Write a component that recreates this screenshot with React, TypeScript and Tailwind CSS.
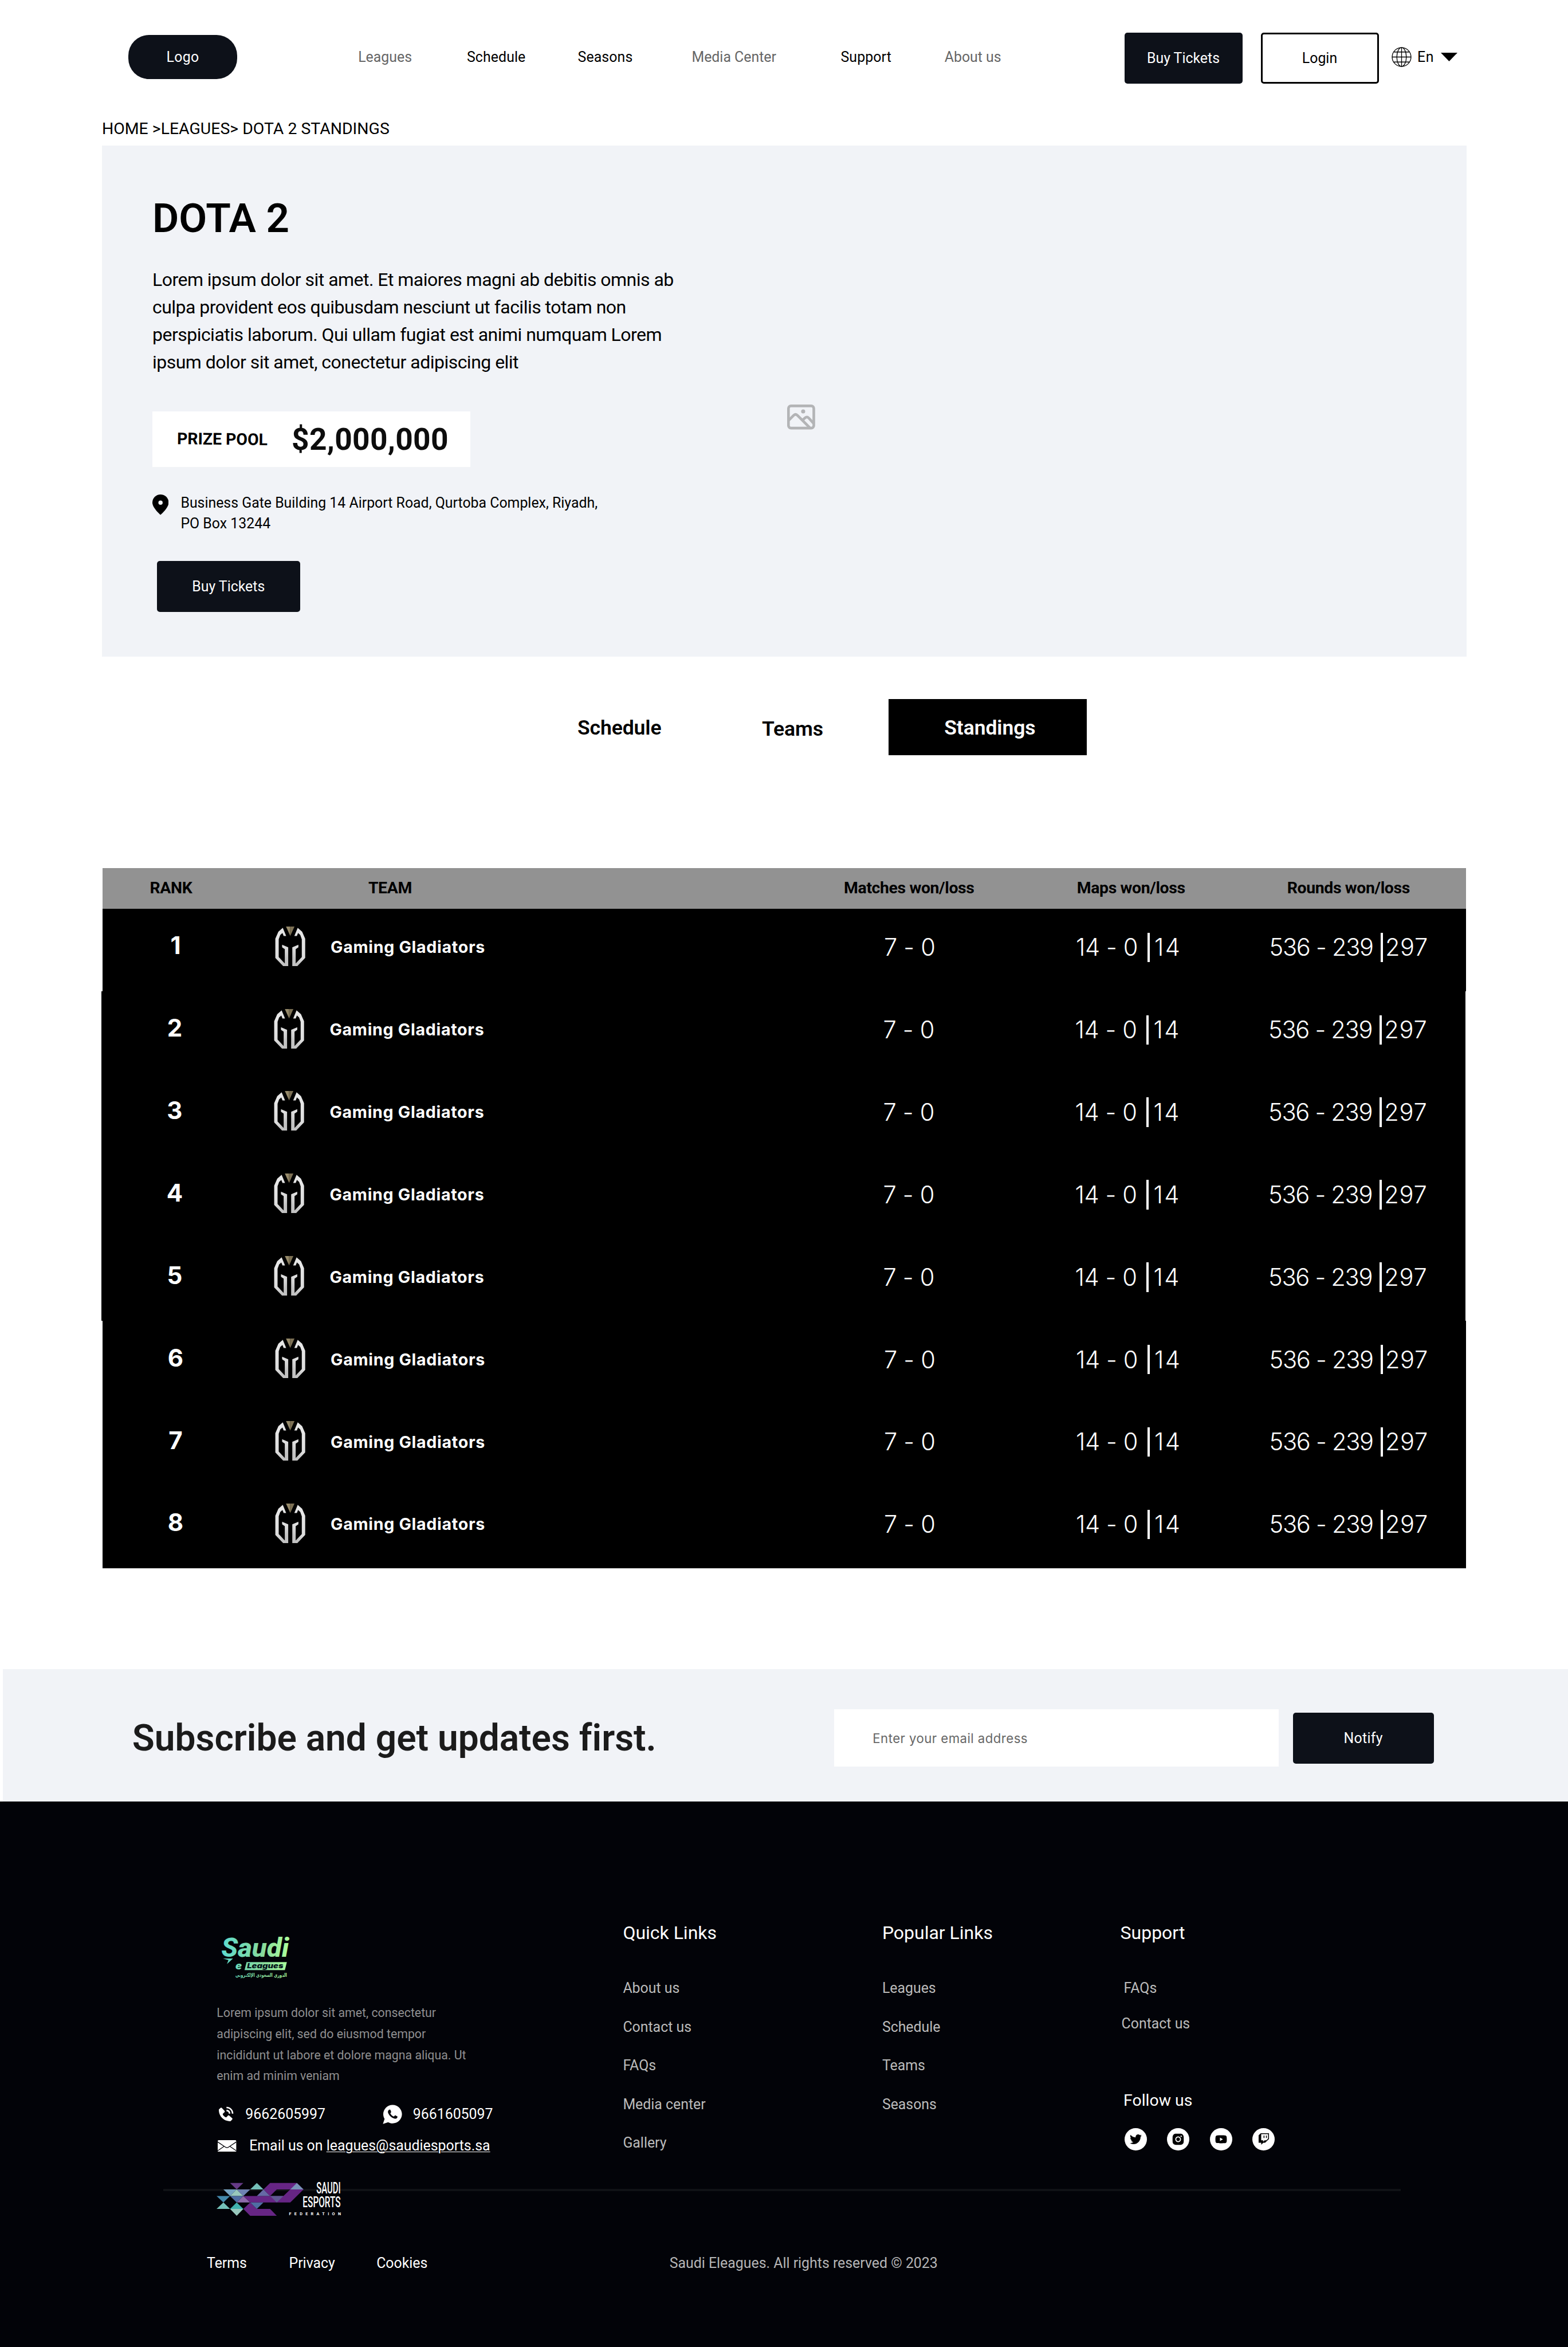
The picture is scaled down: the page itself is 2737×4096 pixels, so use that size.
import { AiFillInstagram } from 'react-icons/ai'
import { BiSolidPhoneCall } from 'react-icons/bi'
import { FaTwitch, FaTwitter, FaYoutube } from 'react-icons/fa'
import { IoLogoWhatsapp } from 'react-icons/io'

interface Standing {
  rank: number
  team: string
  matches: string
  maps: string
  mapDiff: string
  rounds: string
  roundDiff: string
}

const standings: Standing[] = [1, 2, 3, 4, 5, 6, 7, 8].map(rank => ({
  rank,
  team: 'Gaming Gladiators',
  matches: '7 - 0',
  maps: '14 - 0',
  mapDiff: '14',
  rounds: '536 - 239',
  roundDiff: '297',
}))

const navLinks = [
  { label: 'Leagues', muted: true },
  { label: 'Schedule', muted: false },
  { label: 'Seasons', muted: false },
  { label: 'Media Center', muted: true },
  { label: 'Support', muted: false },
  { label: 'About us', muted: true },
]

const quickLinks = ['About us', 'Contact us', 'FAQs', 'Media center', 'Gallery']
const popularLinks = ['Leagues', 'Schedule', 'Teams', 'Seasons']

function GlobeIcon() {
  return (
    <svg viewBox="0 0 40 40" className="size-[35px]" fill="none" stroke="#000" strokeWidth="1.5">
      <circle cx="20" cy="20" r="18.8" />
      <ellipse cx="20" cy="20" rx="9.5" ry="18.8" />
      <path d="M20 1v38M1 20h38M4.5 10h31M4.5 30h31" />
    </svg>
  )
}

function PinIcon() {
  return (
    <svg viewBox="0 0 32 40" className="mt-[3px] h-[35.5px] w-[28.4px]">
      <path d="M16 0C7 0 0 7 0 16c0 10.5 16 24 16 24s16-13.5 16-24C32 7 25 0 16 0z" fill="#000" />
      <circle cx="16" cy="16" r="4.2" fill="#f1f3f7" />
    </svg>
  )
}

function ImageIcon() {
  return (
    <svg viewBox="0 0 55 49" className="mt-[452px] ml-[180px] h-[43.5px] w-[48.8px]" fill="none" stroke="#b3b4b6" strokeWidth="5.2">
      <rect x="2.6" y="2.6" width="49.8" height="43.8" rx="5" />
      <path d="M3 31l9.5-9.5q4-4 8 0L45 46M30 31l5.5-5q3.5-3 7 .5L52 37" />
      <circle cx="31.5" cy="13.5" r="4" fill="#b3b4b6" stroke="none" />
    </svg>
  )
}

function MailIcon() {
  return (
    <svg viewBox="0 0 36 23" className="ml-[2px] h-[20.7px] w-[32.4px]">
      <rect width="36" height="23" rx="2" fill="#fff" />
      <path d="M0 3.5l15.5 10.3q2.5 1.5 5 0L36 3.5M0 20.5l12.5-8.5M36 20.5L23.5 12" fill="none" stroke="#020308" strokeWidth="1.4" />
    </svg>
  )
}

function GladiatorLogo() {
  const half = '110,68 84,90 66,132 66,245 112,293 142,293 142,182 106,167 106,182 122,193 122,278 86,240 86,135 95,110 108,98 115,116 130,116'
  return (
    <svg viewBox="65 60 178 234" className="h-[69.3px] w-[53.3px]">
      <defs>
        <linearGradient id="steel" x1="0" y1="0" x2="0.4" y2="1">
          <stop offset="0" stopColor="#ececec" />
          <stop offset="0.75" stopColor="#dcdcdc" />
          <stop offset="1" stopColor="#c2c2c2" />
        </linearGradient>
      </defs>
      <polygon points={half} fill="url(#steel)" />
      <polygon points={half} fill="url(#steel)" transform="translate(308 0) scale(-1 1)" />
      <polygon points="129,60 154,60 154,116" fill="#968a6a" />
      <polygon points="179,60 154,60 154,116" fill="#7c7054" />
    </svg>
  )
}

function SaudiEleaguesLogo() {
  return (
    <svg viewBox="0 0 135 87" className="ml-[7.5px] h-[76.5px] w-[119.6px] overflow-visible">
      <defs>
        <linearGradient id="mint" gradientUnits="userSpaceOnUse" x1="0" y1="0" x2="135" y2="0">
          <stop offset="0" stopColor="#5edccf" />
          <stop offset="0.6" stopColor="#86d99a" />
          <stop offset="1" stopColor="#adff9c" />
        </linearGradient>
      </defs>
      <g fill="url(#mint)" fontFamily="Roboto, sans-serif" fontWeight="800" fontStyle="italic">
        <text x="0" y="46" fontSize="52" textLength="134" lengthAdjust="spacingAndGlyphs">
          Saudi
        </text>
        {/* bolt tail under the wordmark */}
        <path d="M3 49h20L11 60l3-8z" />
        <path d="M50 56h80l-4 16H46z" />
        <text
          x="28"
          y="85"
          fontSize="10"
          fontStyle="normal"
          fontWeight="700"
          fontFamily="DejaVu Sans, sans-serif"
          textLength="102"
          lengthAdjust="spacingAndGlyphs"
          direction="rtl"
          textAnchor="end"
        >
          الدوري السعودي الإلكتروني
        </text>
      </g>
      <text y="70" fontWeight="900" fontStyle="italic" fontFamily="Inter, sans-serif">
        <tspan x="28" fontSize="21" fill="url(#mint)">e</tspan>
        <tspan x="51" y="68.5" fontSize="14" fill="#04141a" textLength="72" lengthAdjust="spacingAndGlyphs">
          Leagues
        </tspan>
      </text>
    </svg>
  )
}

function FederationLogo() {
  return (
    <svg viewBox="111 1295 598 162" className="relative h-[58.7px] w-[216.7px] overflow-visible">
      <polygon points="176,1297 240,1297 208,1328" fill="#653a86" />
      <polygon points="305,1297 273,1328 337,1328" fill="#74c0b8" />
      <polygon points="144,1328 208,1328 176,1360" fill="#76a5c4" />
      <polygon points="208,1328 240,1360 176,1360" fill="#98c8bd" />
      <polygon points="208,1328 273,1328 240,1360" fill="#6e82b2" />
      <polygon points="111,1360 176,1360 144,1391" fill="#4388ab" />
      <polygon points="176,1360 240,1360 208,1391" fill="#4f6da3" />
      <polygon points="240,1360 273,1391 208,1391" fill="#8d6aaa" />
      <polygon points="144,1391 176,1422 111,1422" fill="#74c0b8" />
      <polygon points="208,1391 240,1422 176,1422" fill="#40b0ac" />
      <polygon points="176,1422 240,1422 208,1455" fill="#98c8bd" />
      <path
        fillRule="evenodd"
        fill="#662584"
        d="M369 1297H498L530 1328L466 1391H273L240 1360H369L337 1328ZM401 1328L369 1360H433L466 1328Z"
      />
      <polygon points="273,1391 305,1422 369,1422 401,1455 273,1455 240,1422" fill="#662584" />
      <polygon points="273,1391 337,1391 305,1422" fill="#4f6da3" />
      <polygon points="337,1328 369,1360 305,1360" fill="#6669a5" />
      <polygon points="498,1297 530,1328 466,1328" fill="#7893b8" />
      <polygon points="369,1360 433,1360 401,1391" fill="#5f5891" />
      <g fill="#fff" fontFamily="Roboto, sans-serif">
        <text x="592" y="1348" fontSize="74" fontWeight="500" textLength="117" lengthAdjust="spacingAndGlyphs">SAUDI</text>
        <text x="526" y="1415" fontSize="72" fontWeight="500" textLength="183" lengthAdjust="spacingAndGlyphs">ESPORTS</text>
        <text x="460" y="1452" fontSize="20" fontWeight="700" textLength="250">FEDERATION</text>
      </g>
    </svg>
  )
}

function Header() {
  return (
    <header className="flex h-[199px] items-center pr-[193px] pl-[224px] text-[24.87px] whitespace-nowrap">
      <div className="flex h-[76.5px] w-[190px] items-center justify-center rounded-[36px] bg-[#0d1119] tracking-[0.3px] text-white">
        Logo
      </div>
      <nav className="ml-[211.2px] grid grid-cols-[189.8px_193.6px_198.9px_260px_181.3px_auto] pt-px">
        {navLinks.map(link => (
          <a key={link.label} className={link.muted ? 'text-[#666]' : 'font-[450] tracking-[0.1px] text-black'}>
            {link.label}
          </a>
        ))}
      </nav>
      <div className="ml-auto flex items-center">
        <button className="mt-[3.5px] h-[89px] w-[206px] rounded-[5px] bg-[#0d1119] text-white">Buy Tickets</button>
        <button className="mt-[3.5px] ml-[32px] h-[89px] w-[206px] rounded-[5px] border-[3.5px] border-black">Login</button>
        <div className="ml-[22.5px] flex items-center">
          <GlobeIcon />
          <span className="ml-[10px] w-[41px] pt-px font-[450] tracking-[0.5px]">En</span>
          <svg viewBox="0 0 29 15" className="h-[15px] w-[29px]">
            <path d="M0 0h29L14.5 15z" />
          </svg>
        </div>
      </div>
    </header>
  )
}

function Hero() {
  return (
    <section className="mx-[178px] flex h-[892px] w-[2381.5px] bg-[#f1f3f7]">
      <div className="w-[1016px] pt-[85.3px] pl-[88px]">
        <h1 className="text-[71px] leading-[84px] font-semibold">DOTA 2</h1>
        <p className="mt-[42.2px] w-[928px] text-[31.97px] leading-[47.94px] tracking-[-0.51px]">
          Lorem ipsum dolor sit amet. Et maiores magni ab debitis omnis ab culpa provident eos quibusdam nesciunt ut
          facilis totam non perspiciatis laborum. Qui ullam fugiat est animi numquam Lorem ipsum dolor sit amet,
          conectetur adipiscing elit
        </p>
        <div className="mt-[60.5px] flex h-[97.7px] w-[554.5px] items-center bg-white pl-[43px]">
          <div className="w-[200px] pt-[2px]">
            <span className="inline-block rotate-[0.6deg] text-[28.42px] font-bold">PRIZE POOL</span>
          </div>
          <span className="pt-[2px] text-[53.3px] leading-none font-bold tracking-[0.3px] text-[#0d0d0d]">$2,000,000</span>
        </div>
        <div className="mt-[45px] flex gap-[21px]">
          <PinIcon />
          <p className="w-[750px] text-[24.87px] leading-[35.5px]">
            Business Gate Building 14 Airport Road, Qurtoba Complex, Riyadh, PO Box 13244
          </p>
        </div>
        <button className="mt-[47.3px] ml-[7.5px] h-[89px] w-[250.5px] rounded-[5px] bg-[#0d1119] text-[24.87px] text-white">
          Buy Tickets
        </button>
      </div>
      <ImageIcon />
    </section>
  )
}

function Tabs() {
  return (
    <div className="mt-[74.4px] flex h-[97.7px] items-center pl-[1008px] text-[35.52px] font-semibold tracking-[-0.1px]">
      <a className="w-[322px] pt-[3px]">Schedule</a>
      <a className="w-[220.8px] pt-[7px]">Teams</a>
      <a className="flex h-full w-[346.5px] items-center bg-black pt-[3px] pl-[97.5px] text-white">Standings</a>
    </div>
  )
}

function StandingsTable() {
  return (
    <section className="mt-[196.9px] ml-[179px] w-[2380.4px]">
      <div className="grid h-[71px] grid-cols-[381.4px_830.2px_406.7px_367px_auto] items-center bg-[#929292] pl-[82.5px] text-[28.42px] font-bold tracking-[-0.38px]">
        <span>RANK</span>
        <span>TEAM</span>
        <span>Matches won/loss</span>
        <span>Maps won/loss</span>
        <span>Rounds won/loss</span>
      </div>
      {standings.map(row => (
        <div
          key={row.rank}
          className={`grid h-[143.87px] w-[2380.4px] grid-cols-[255px_143px_966px_335px_337.6px_auto] items-center bg-black pb-[8px] font-['Inter'] text-white ${
            row.rank >= 2 && row.rank <= 5 ? '-ml-[1.6px]' : ''
          }`}
        >
          <span className="pb-[7px] text-center text-[42px] leading-none font-bold">{row.rank}</span>
          <div className="pb-[5px] pl-[46px]">
            <GladiatorLogo />
          </div>
          <span className="text-[28.6px] font-bold tracking-[0.7px]">{row.team}</span>
          <span className="pb-px text-[41.6px] font-[350] tracking-[-0.3px]">{row.matches}</span>
          <div className="flex items-center pb-px text-[41.6px] font-[350]">
            <span className="w-[124.6px] tracking-[-0.4px]">{row.maps}</span>
            <span className="h-[51.5px] w-[4px] bg-white" />
            <span className="pl-[8.5px] tracking-[2.4px]">{row.mapDiff}</span>
          </div>
          <div className="flex items-center pb-px text-[41.6px] font-[350]">
            <span className="w-[194.3px] tracking-[-1.3px]">{row.rounds}</span>
            <span className="h-[51.5px] w-[4px] bg-white" />
            <span className="pl-[4px] tracking-[0.7px]">{row.roundDiff}</span>
          </div>
        </div>
      ))}
    </section>
  )
}

function Subscribe() {
  return (
    <section className="mt-[175.7px] ml-[5.3px] flex h-[231px] items-center bg-[#f1f3f7] pt-[10px] pl-[225.5px]">
      <h2 className="w-[1225.5px] pt-[2px] text-[63.94px] leading-none font-semibold tracking-[0.02px] text-[#1b1b1b]">
        Subscribe and get updates first.
      </h2>
      <input
        className="h-[99.5px] w-[775.3px] bg-white pl-[67px] font-['Inter'] text-[22.2px] tracking-[0.45px] placeholder:text-[#666]"
        placeholder="Enter your email address"
      />
      <button className="ml-[25px] h-[89px] w-[246px] rounded-[5px] bg-[#0d1119] pt-px text-[24.87px] tracking-[0.3px] text-white">
        Notify
      </button>
    </section>
  )
}

function FooterColumn({ title, links }: { title: string; links: string[] }) {
  return (
    <div>
      <h3 className="text-[31.97px] leading-[38px] text-white">{title}</h3>
      <ul className="mt-[44.8px] text-[24.87px] leading-[67.5px] text-[#bbb]">
        {links.map(link => (
          <li key={link}>{link}</li>
        ))}
      </ul>
    </div>
  )
}

function Footer() {
  return (
    <footer className="h-[952.3px] bg-[#020308] text-[24.87px] text-white">
      <div className="grid h-[676.7px] grid-cols-[709.1px_452.5px_415.7px_auto] pt-[210px] pl-[378.3px]">
        <div className="pt-[21.6px]">
          <SaudiEleaguesLogo />
          <p className="mt-[43.7px] w-[448px] text-[21.31px] leading-[36.7px] text-[#8f8f90]">
            Lorem ipsum dolor sit amet, consectetur adipiscing elit, sed do eiusmod tempor incididunt ut labore et
            dolore magna aliqua. Ut enim ad minim veniam
          </p>
          <div className="mt-[29.5px] flex h-[36px] items-center">
            <BiSolidPhoneCall className="size-[32px]" />
            <span className="ml-[18px] w-[237.5px]">9662605997</span>
            <IoLogoWhatsapp className="size-[38px]" />
            <span className="ml-[17px]">9661605097</span>
          </div>
          <div className="mt-[19.4px] flex h-[36px] items-center">
            <MailIcon />
            <span className="ml-[22.5px]">
              Email us on <a className="underline decoration-1 underline-offset-2">leagues@saudiesports.sa</a>
            </span>
          </div>
          <div className="mt-[45.5px]">
            <FederationLogo />
          </div>
        </div>
        <FooterColumn title="Quick Links" links={quickLinks} />
        <FooterColumn title="Popular Links" links={popularLinks} />
        <div>
          <h3 className="text-[31.97px] leading-[38px]">Support</h3>
          <ul className="mt-[47.5px] text-[24.87px] leading-[62.2px] text-[#bbb]">
            <li className="pl-[6px]">FAQs</li>
            <li className="pl-[2px]">Contact us</li>
          </ul>
          <h4 className="mt-[84.5px] pl-[5.5px] text-[28.42px] leading-[36px]">Follow us</h4>
          <div className="mt-[30px] flex gap-[35.6px] pl-[7px] text-black">
            <span className="flex size-[39px] items-center justify-center rounded-full bg-white">
              <FaTwitter className="size-[21px]" />
            </span>
            <span className="flex size-[39px] items-center justify-center rounded-full bg-white">
              <AiFillInstagram className="size-[25px]" />
            </span>
            <span className="flex size-[39px] items-center justify-center rounded-full bg-white">
              <FaYoutube className="size-[21px]" />
            </span>
            <span className="flex size-[39px] items-center justify-center rounded-full bg-white">
              <FaTwitch className="size-[20px]" />
            </span>
          </div>
        </div>
      </div>
      <div className="ml-[285px] h-[3.3px] w-[2160px] bg-[#101216]" />
      <div className="mt-[108px] flex pl-[361px] leading-[36px]">
        <a className="w-[143.5px]">Terms</a>
        <a className="w-[152.7px]">Privacy</a>
        <a className="w-[511.5px]">Cookies</a>
        <span className="text-[#b5b5b6]">Saudi Eleagues. All rights reserved © 2023</span>
      </div>
    </footer>
  )
}

export default function App() {
  return (
    <div className="h-[4096px] w-[2737px] overflow-hidden bg-white font-['Roboto',sans-serif] text-black">
      <Header />
      <div className="h-[55px] pl-[178px] text-[28.42px] leading-[52px]">HOME &gt;LEAGUES&gt; DOTA 2 STANDINGS</div>
      <Hero />
      <Tabs />
      <StandingsTable />
      <Subscribe />
      <Footer />
    </div>
  )
}
